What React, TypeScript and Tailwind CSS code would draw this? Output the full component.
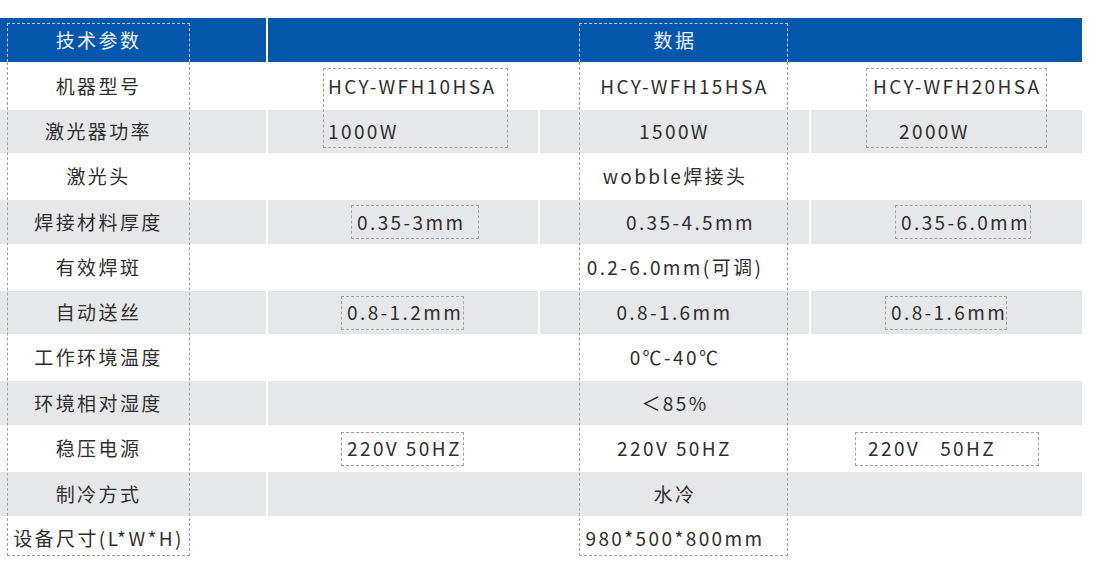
import React from 'react';

type Cell = { text: string; cls: string; box?: string };

interface Row {
  label: string;
  gray: boolean;
  h: string;
  span?: string;
  cells?: Cell[];
}

const rows: Row[] = [
  {
    label: '机器型号',
    gray: false,
    h: 'h-[48px]',
    cells: [
      { text: 'HCY-WFH10HSA', cls: 'justify-start pl-[60px]' },
      { text: 'HCY-WFH15HSA', cls: 'justify-center pl-[20px]' },
      { text: 'HCY-WFH20HSA', cls: 'justify-start pl-[62px]' },
    ],
  },
  {
    label: '激光器功率',
    gray: true,
    h: 'h-[43px]',
    cells: [
      { text: '1000W', cls: 'justify-start pl-[60px]' },
      { text: '1500W', cls: 'justify-center' },
      { text: '2000W', cls: 'justify-start pl-[88px]' },
    ],
  },
  { label: '激光头', gray: false, h: 'h-[47px]', span: 'wobble焊接头' },
  {
    label: '焊接材料厚度',
    gray: true,
    h: 'h-[44px]',
    cells: [
      { text: '0.35-3mm', cls: 'justify-start pl-[83px]', box: 'w-[128px] pl-[5px]' },
      { text: '0.35-4.5mm', cls: 'justify-center pl-[32px]' },
      { text: '0.35-6.0mm', cls: 'justify-start pl-[84px]', box: 'w-[136px] pl-[5px]' },
    ],
  },
  { label: '有效焊斑', gray: false, h: 'h-[47px]', span: '0.2-6.0mm(可调)' },
  {
    label: '自动送丝',
    gray: true,
    h: 'h-[43px]',
    cells: [
      { text: '0.8-1.2mm', cls: 'justify-start pl-[73px]', box: 'w-[123px] pl-[5px]' },
      { text: '0.8-1.6mm', cls: 'justify-center' },
      { text: '0.8-1.6mm', cls: 'justify-start pl-[74px]', box: 'w-[122px] pl-[5px]' },
    ],
  },
  { label: '工作环境温度', gray: false, h: 'h-[47px]', span: '0℃-40℃' },
  { label: '环境相对湿度', gray: true, h: 'h-[44px]', span: '＜85%' },
  {
    label: '稳压电源',
    gray: false,
    h: 'h-[47px]',
    cells: [
      { text: '220V 50HZ', cls: 'justify-start pl-[73px]', box: 'w-[123px] pl-[5px]' },
      { text: '220V 50HZ', cls: 'justify-center' },
      { text: '220V\u00a0\u00a0 50HZ', cls: 'justify-start pl-[44px]', box: 'w-[184px] pl-[12px]' },
    ],
  },
  { label: '制冷方式', gray: true, h: 'h-[44px]', span: '水冷' },
  { label: '设备尺寸(L*W*H)', gray: false, h: 'h-[45px]', span: '980*500*800mm' },
];

export default function App() {
  return (
    <div className="relative w-[1099px] h-[569px] bg-white pt-[18px] font-['Noto_Sans_CJK_SC','Noto_Sans',sans-serif] text-[19px] tracking-[2.4px] text-[#2f2f2f]">
      <div className="grid w-[1082px] grid-cols-[266px_270px_269px_271px] gap-x-[2px]">
        {/* header */}
        <div className="flex h-[44px] items-center bg-[#0557ab] text-[#eef3fb]">
          <div className="ml-[7px] w-[183px] text-center">技术参数</div>
        </div>
        <div className="col-span-3 flex h-[44px] items-center justify-center bg-[#0557ab] text-[#eef3fb]">
          数据
        </div>

        {rows.map((row) => {
          const bg = row.gray ? 'bg-[#e6e7e9]' : 'bg-white';
          return (
            <React.Fragment key={row.label}>
              <div className={`flex items-center ${row.h} ${bg}`}>
                <div className="ml-[7px] w-[183px] whitespace-nowrap text-center">{row.label}</div>
              </div>
              {row.span !== undefined ? (
                <div className={`col-span-3 flex items-center justify-center ${row.h} ${bg}`}>
                  {row.span}
                </div>
              ) : (
                row.cells!.map((c, i) => (
                  <div key={i} className={`flex items-center whitespace-nowrap ${row.h} ${bg} ${c.cls}`}>
                    {c.box ? (
                      <span className={`flex h-[34px] items-center border border-dashed border-[#a3a3a3] ${c.box}`}>
                        {c.text}
                      </span>
                    ) : (
                      c.text
                    )}
                  </div>
                ))
              )}
            </React.Fragment>
          );
        })}
      </div>

      {/* dashed selection outlines lying over the table */}
      <div className="pointer-events-none absolute left-[7px] top-[23px] h-[39px] w-[183px] border border-b-0 border-dashed border-[#b9cbe2]" />
      <div className="pointer-events-none absolute left-[7px] top-[62px] h-[494px] w-[183px] border border-t-0 border-dashed border-[#a3a3a3]" />
      <div className="pointer-events-none absolute left-[579px] top-[23px] h-[39px] w-[209px] border border-b-0 border-dashed border-[#b9cbe2]" />
      <div className="pointer-events-none absolute left-[579px] top-[62px] h-[494px] w-[209px] border border-t-0 border-dashed border-[#a3a3a3]" />
      <div className="pointer-events-none absolute left-[323px] top-[68px] h-[80px] w-[185px] border border-dashed border-[#a3a3a3]" />
      <div className="pointer-events-none absolute left-[866px] top-[68px] h-[80px] w-[181px] border border-dashed border-[#a3a3a3]" />
    </div>
  );
}
